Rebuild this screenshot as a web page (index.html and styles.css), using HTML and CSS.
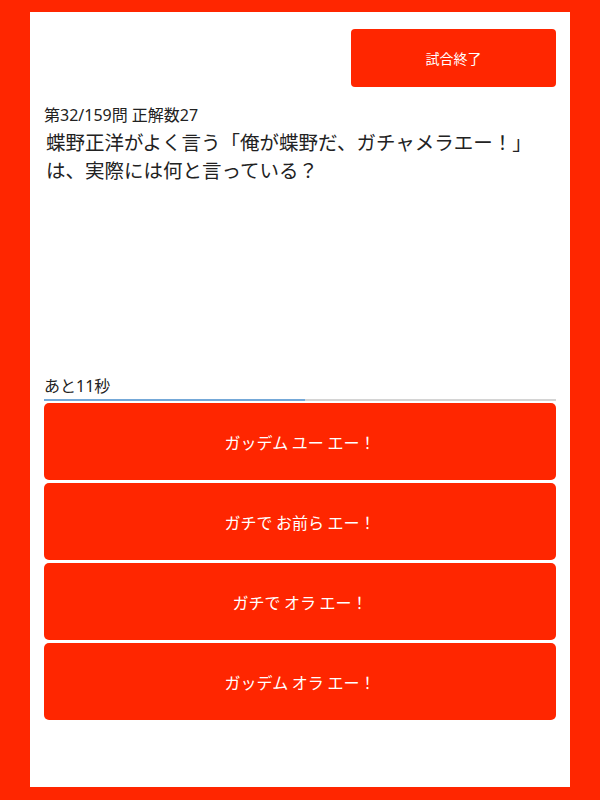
FILE: index.html
```html
<!DOCTYPE html>
<html lang="ja">
<head>
  <meta charset="UTF-8" />
  <meta name="viewport" content="width=device-width, initial-scale=1.0"/>
  <title>クイズ</title>
  <link rel="stylesheet" href="styles.css">
</head>
<body>
  <div class="quiz">
    <header>
      <button class="btn-end">試合終了</button>
    </header>
    <div class="status">第32/159問 正解数27</div>
    <div class="question">蝶野正洋がよく言う「俺が蝶野だ、ガチャメラエー！」は、実際には何と言っている？</div>
    <div class="timer">あと11秒</div>
    <div class="progress"><div class="progress-fill" style="width: 51%"></div></div>
    <footer>
      <button class="btn-answer">ガッデム ユー エー！</button>
      <button class="btn-answer">ガチで お前ら エー！</button>
      <button class="btn-answer">ガチで オラ エー！</button>
      <button class="btn-answer">ガッデム オラ エー！</button>
    </footer>
  </div>
</body>
</html>
```

FILE: styles.css
```css
body {
  margin: 0;
  padding: 12px 30px 13px;
  background-color: #ff2600;
  font-family: "Noto Sans CJK JP", "Noto Sans", sans-serif;
  color: #222;
}

.quiz {
  background-color: #fff;
  height: 775px;
  padding: 17px 14px 0;
  box-sizing: border-box;
}

header {
  display: flex;
  justify-content: flex-end;
}

button {
  font-family: inherit;
  border: none;
  background-color: #ff2600;
  color: #fff;
  cursor: pointer;
}

.btn-end {
  width: 205px;
  height: 58px;
  border-radius: 4px;
  font-size: 14px;
}

.status,
.timer {
  font-family: "Noto Sans", "Noto Sans CJK JP", sans-serif;
  font-size: 16px;
  line-height: 20px;
}

.status {
  margin-top: 18px;
}

.question {
  margin-top: 3px;
  padding-left: 2px;
  height: 248px;
  font-size: 19.5px;
  line-height: 28px;
}

.progress {
  margin-top: 3px;
  height: 2px;
  background-color: #d4d4d4;
}

.progress-fill {
  height: 100%;
  background-color: #74a8d8;
}

footer {
  margin-top: 2px;
  display: flex;
  flex-direction: column;
  gap: 3px;
}

.btn-answer {
  height: 77px;
  border-radius: 5px;
  font-size: 16px;
}
```
